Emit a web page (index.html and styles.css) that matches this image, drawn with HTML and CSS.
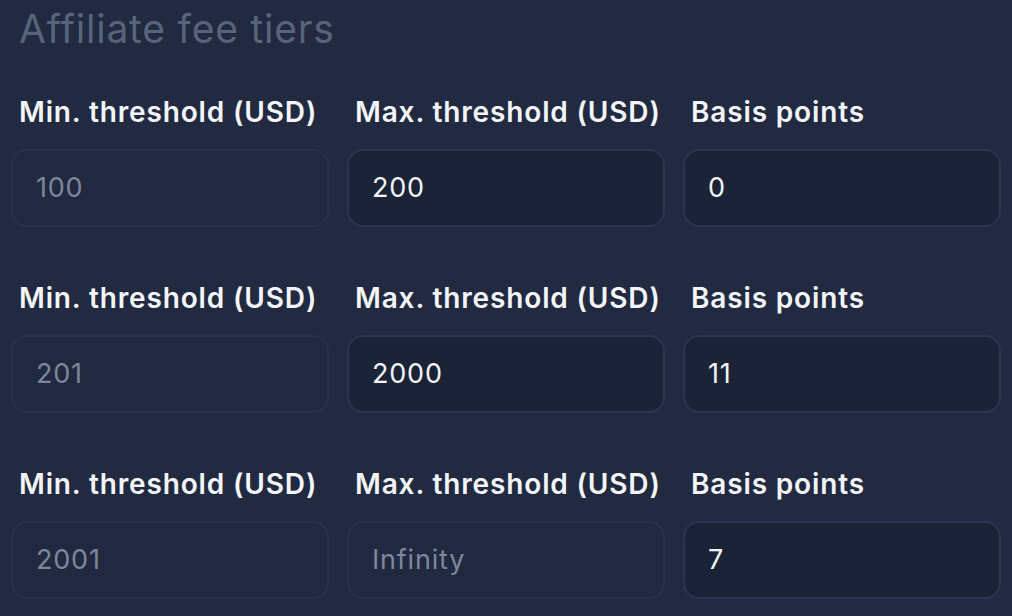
FILE: index.html
```html
<!DOCTYPE html>
<html>
<head>
<meta charset="utf-8">
<link rel="stylesheet" href="styles.css">
</head>
<body>
<div class="panel">
  <h2 class="title">Affiliate fee tiers</h2>
  <div class="tiers">
    <div class="tier">
      <div class="field"><label class="label">Min. threshold (USD)</label><div class="input disabled">100</div></div>
      <div class="field"><label class="label">Max. threshold (USD)</label><div class="input">200</div></div>
      <div class="field"><label class="label">Basis points</label><div class="input">0</div></div>
    </div>
    <div class="tier">
      <div class="field"><label class="label">Min. threshold (USD)</label><div class="input disabled">201</div></div>
      <div class="field"><label class="label">Max. threshold (USD)</label><div class="input">2000</div></div>
      <div class="field"><label class="label">Basis points</label><div class="input">11</div></div>
    </div>
    <div class="tier">
      <div class="field"><label class="label">Min. threshold (USD)</label><div class="input disabled">2001</div></div>
      <div class="field"><label class="label">Max. threshold (USD)</label><div class="input disabled">Infinity</div></div>
      <div class="field"><label class="label">Basis points</label><div class="input">7</div></div>
    </div>
  </div>
</div>
</body>
</html>
```
FILE: styles.css
```css
html, body {
  margin: 0;
  padding: 0;
  background: #212a40;
  height: 100%;
  overflow: hidden;
}
.panel {
  padding: 6px 11px 0 11px;
  font-family: Inter, "Noto Sans", sans-serif;
}
.title {
  margin: 0 0 0 8px;
  font-size: 39px;
  letter-spacing: 0.8px;
  font-weight: 400;
  line-height: 46px;
  color: #58647c;
}
.tiers {
  display: flex;
  flex-direction: column;
  gap: 52px;
  margin-top: 41px;
}
.tier {
  display: grid;
  grid-template-columns: 318px 318px 318px;
  column-gap: 18px;
}
.field {
  display: flex;
  flex-direction: column;
  gap: 18px;
}
.label {
  padding-left: 8px;
  font-size: 28px;
  letter-spacing: 0.85px;
  font-weight: 600;
  line-height: 38px;
  color: #f3f5f9;
  white-space: nowrap;
}
.input {
  box-sizing: border-box;
  height: 78px;
  border: 2px solid #2c3551;
  border-radius: 16px;
  background: #1b2336;
  color: #f3f5f9;
  font-size: 27px;
  letter-spacing: 0.8px;
  line-height: 74px;
  padding-left: 23px;
}
.input.disabled {
  background: #202940;
  border-color: #29324b;
  color: #7e869a;
}
```
